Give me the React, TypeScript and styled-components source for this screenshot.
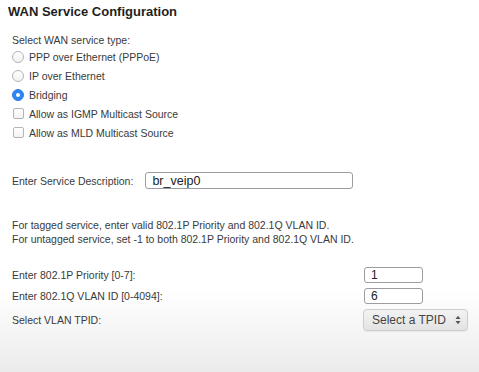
import React from "react";
import styled, { createGlobalStyle } from "styled-components";

const Global = createGlobalStyle`
  html, body { margin: 0; padding: 0; }
  body {
    font-family: "Liberation Sans", Arial, Helvetica, sans-serif;
    color: #3a3a3a;
    background: linear-gradient(to bottom, #ffffff 0px, #ffffff 290px, #ebebeb 372px);
    min-height: 372px;
  }
`;

const Page = styled.div`
  width: 479px;
  height: 372px;
  box-sizing: border-box;
  padding-top: 4px;
  display: flex;
  flex-direction: column;
`;

const Title = styled.h1`
  margin: 0 0 0 8px;
  font-size: 13px;
  line-height: 16px;
  font-weight: bold;
  color: #1f1f1f;
`;

const Section = styled.div<{ $top: number }>`
  margin-top: ${(p) => p.$top}px;
  padding-left: 12px;
  display: flex;
  flex-direction: column;
`;

const Text = styled.div`
  font-size: 10.5px;
  line-height: 14px;
  color: #3a3a3a;
  white-space: nowrap;
`;

const OptionRow = styled.label`
  display: flex;
  align-items: center;
  gap: 5px;
  height: 19px;
  font-size: 10.5px;
  color: #3a3a3a;
  white-space: nowrap;
`;

const Radio = styled.input.attrs({ type: "radio" })`
  appearance: none;
  margin: 0;
  width: 12px;
  height: 12px;
  border-radius: 50%;
  box-sizing: border-box;
  border: 1px solid #b4b4b4;
  background: linear-gradient(#ffffff, #f1f1f1);
  position: relative;
  &:checked {
    border-color: #2f7fe8;
    background: #2d86f5;
  }
  &:checked::after {
    content: "";
    position: absolute;
    left: 3px;
    top: 3px;
    width: 4px;
    height: 4px;
    border-radius: 50%;
    background: #fff;
  }
`;

const Check = styled.input.attrs({ type: "checkbox" })`
  appearance: none;
  margin: 0 0 0 1px;
  width: 11px;
  height: 11px;
  border-radius: 2px;
  box-sizing: border-box;
  border: 1px solid #b4b4b4;
  background: linear-gradient(#ffffff, #f3f3f3);
`;

const DescRow = styled.div`
  margin-top: 30px;
  padding-left: 12px;
  display: flex;
  align-items: center;
  gap: 12px;
  height: 17px;
`;

const TextField = styled.input<{ $w: number; $h: number; $fs: number }>`
  box-sizing: border-box;
  width: ${(p) => p.$w}px;
  height: ${(p) => p.$h}px;
  margin: 0;
  padding: 0 6px;
  border: 1px solid #9c9ca2;
  border-radius: 3px;
  background: #fff;
  font-family: "Liberation Sans", Arial, sans-serif;
  font-size: ${(p) => p.$fs}px;
  line-height: ${(p) => p.$h - 2}px;
  color: #222;
  outline: none;
`;

const Grid = styled.div`
  margin-top: 21px;
  padding-left: 12px;
  display: grid;
  grid-template-columns: 351px auto;
  grid-template-rows: 16px 16px 22px;
  row-gap: 5px;
  align-items: center;
`;

const FieldCell = styled.div<{ $shift?: number }>`
  margin-left: ${(p) => p.$shift ?? 1}px;
  display: flex;
`;

const SelectWrap = styled.div`
  position: relative;
  width: 105px;
  height: 22px;
`;

const Select = styled.select`
  appearance: none;
  box-sizing: border-box;
  width: 105px;
  height: 22px;
  margin: 0;
  padding: 0 0 0 8px;
  border: 1px solid #cdcdcd;
  border-radius: 4px;
  background: linear-gradient(#f3f3f3, #e3e3e3);
  box-shadow: 0 1px 1px rgba(0, 0, 0, 0.06);
  font-family: "Liberation Sans", Arial, sans-serif;
  font-size: 12px;
  color: #444;
  outline: none;
`;

const Arrows = styled.svg`
  position: absolute;
  right: 7px;
  top: 6px;
  pointer-events: none;
`;

export default function App() {
  return (
    <>
      <Global />
      <Page>
        <Title>WAN Service Configuration</Title>
        <Section $top={13}>
          <Text>Select WAN service type:</Text>
          <OptionRow>
            <Radio name="svc" />
            PPP over Ethernet (PPPoE)
          </OptionRow>
          <OptionRow>
            <Radio name="svc" />
            IP over Ethernet
          </OptionRow>
          <OptionRow>
            <Radio name="svc" defaultChecked />
            Bridging
          </OptionRow>
          <OptionRow>
            <Check />
            Allow as IGMP Multicast Source
          </OptionRow>
          <OptionRow>
            <Check />
            Allow as MLD Multicast Source
          </OptionRow>
        </Section>
        <DescRow>
          <Text>Enter Service Description:</Text>
          <TextField $w={208} $h={17} $fs={12.5} defaultValue="br_veip0" />
        </DescRow>
        <Section $top={29}>
          <Text>For tagged service, enter valid 802.1P Priority and 802.1Q VLAN ID.</Text>
          <Text>For untagged service, set -1 to both 802.1P Priority and 802.1Q VLAN ID.</Text>
        </Section>
        <Grid>
          <Text>Enter 802.1P Priority [0-7]:</Text>
          <FieldCell>
            <TextField $w={59} $h={16} $fs={12} defaultValue="1" />
          </FieldCell>
          <Text>Enter 802.1Q VLAN ID [0-4094]:</Text>
          <FieldCell>
            <TextField $w={59} $h={16} $fs={12} defaultValue="6" />
          </FieldCell>
          <Text>Select VLAN TPID:</Text>
          <FieldCell $shift={0}>
            <SelectWrap>
              <Select defaultValue="">
                <option value="">Select a TPID</option>
                <option value="8100">0x8100</option>
                <option value="88a8">0x88A8</option>
                <option value="9100">0x9100</option>
              </Select>
              <Arrows width="6" height="10" viewBox="0 0 6 10">
                <path d="M0.5 4 L3 0.8 L5.5 4 Z" fill="#555" />
                <path d="M0.5 6 L3 9.2 L5.5 6 Z" fill="#555" />
              </Arrows>
            </SelectWrap>
          </FieldCell>
        </Grid>
      </Page>
    </>
  );
}
